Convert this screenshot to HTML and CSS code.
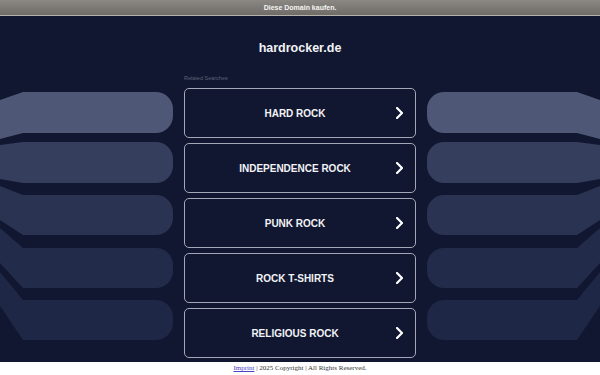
FILE: index.html
```html
<!DOCTYPE html>
<html>
<head>
  <title>hardrocker.de</title>
  <link rel="stylesheet" href="styles.css">
</head>
<body>
  <div class="topbar">Diese Domain kaufen.</div>

  <div class="main">
    <svg class="deco" width="173" height="346" viewBox="0 16 173 346">
      <path fill="#4e5776" d="M0,100 L23,92 L156,92 A17,17 0 0 1 173,109 L173,116 A17,17 0 0 1 156,133 L23,133 L0,139 Z"/>
      <path fill="#363e5e" d="M0,145 L23,142 L156,142 A17,17 0 0 1 173,159 L173,166 A17,17 0 0 1 156,183 L23,183 L0,179 Z"/>
      <path fill="#2b3352" d="M0,186 L23,195 L156,195 A17,17 0 0 1 173,212 L173,218 A17,17 0 0 1 156,235 L23,235 L0,220 Z"/>
      <path fill="#232b4b" d="M0,228 L23,248 L156,248 A17,17 0 0 1 173,265 L173,271 A17,17 0 0 1 156,288 L23,288 L0,263 Z"/>
      <path fill="#1f2746" d="M0,272 L23,300 L156,300 A17,17 0 0 1 173,317 L173,323 A17,17 0 0 1 156,340 L23,340 L0,306 Z"/>
    </svg>

    <div class="center">
      <h1 class="domain">hardrocker.de</h1>
      <div class="related">Related Searches</div>
      <div class="links">
        <a class="link" href="#"><span class="label">HARD ROCK</span><svg class="chev" width="7" height="12" viewBox="0 0 7 12"><polyline points="1,1 6,6 1,11"/></svg></a>
        <a class="link" href="#"><span class="label">INDEPENDENCE ROCK</span><svg class="chev" width="7" height="12" viewBox="0 0 7 12"><polyline points="1,1 6,6 1,11"/></svg></a>
        <a class="link" href="#"><span class="label">PUNK ROCK</span><svg class="chev" width="7" height="12" viewBox="0 0 7 12"><polyline points="1,1 6,6 1,11"/></svg></a>
        <a class="link" href="#"><span class="label">ROCK T-SHIRTS</span><svg class="chev" width="7" height="12" viewBox="0 0 7 12"><polyline points="1,1 6,6 1,11"/></svg></a>
        <a class="link" href="#"><span class="label">RELIGIOUS ROCK</span><svg class="chev" width="7" height="12" viewBox="0 0 7 12"><polyline points="1,1 6,6 1,11"/></svg></a>
      </div>
    </div>

    <svg class="deco deco-right" width="173" height="346" viewBox="0 16 173 346">
      <path fill="#4e5776" d="M0,100 L23,92 L156,92 A17,17 0 0 1 173,109 L173,116 A17,17 0 0 1 156,133 L23,133 L0,139 Z"/>
      <path fill="#363e5e" d="M0,145 L23,142 L156,142 A17,17 0 0 1 173,159 L173,166 A17,17 0 0 1 156,183 L23,183 L0,179 Z"/>
      <path fill="#2b3352" d="M0,186 L23,195 L156,195 A17,17 0 0 1 173,212 L173,218 A17,17 0 0 1 156,235 L23,235 L0,220 Z"/>
      <path fill="#232b4b" d="M0,228 L23,248 L156,248 A17,17 0 0 1 173,265 L173,271 A17,17 0 0 1 156,288 L23,288 L0,263 Z"/>
      <path fill="#1f2746" d="M0,272 L23,300 L156,300 A17,17 0 0 1 173,317 L173,323 A17,17 0 0 1 156,340 L23,340 L0,306 Z"/>
    </svg>
  </div>

  <div class="footer">
    <a href="#">Imprint</a> | 2025 Copyright | All Rights Reserved.
  </div>
</body>
</html>
```

FILE: styles.css
```css
body {
  margin: 0;
  background-color: #111730;
  font-family: "Liberation Sans", Arial, sans-serif;
}
.topbar {
  height: 15px;
  line-height: 15px;
  background: linear-gradient(#8b8883, #6f6c68);
  border-bottom: 1px solid #b3b1ac;
  color: #f4f4f4;
  font-size: 7px;
  font-weight: bold;
  text-align: center;
}
.main {
  display: flex;
  gap: 11px;
  height: 346px;
  overflow: hidden;
}
.deco {
  flex: none;
  display: block;
}
.deco-right {
  transform: scaleX(-1);
}
.center {
  width: 232px;
  flex: none;
  padding-top: 25px;
}
.domain {
  margin: 0;
  height: 14px;
  line-height: 14px;
  font-size: 12.5px;
  font-weight: bold;
  color: #f2f3f6;
  text-align: center;
}
.related {
  margin-top: 20px;
  height: 6px;
  line-height: 6px;
  font-size: 5.5px;
  color: #5b6279;
}
.links {
  display: flex;
  flex-direction: column;
  gap: 5px;
  margin-top: 7px;
}
.link {
  display: flex;
  align-items: center;
  height: 50px;
  box-sizing: border-box;
  padding-left: 9px;
  border: 1.5px solid #a3a7b6;
  border-radius: 5px;
  color: #f2f3f6;
  text-decoration: none;
  font-size: 10px;
  font-weight: bold;
}
.label {
  flex: 1;
  text-align: center;
}
.chev {
  flex: none;
  margin-right: 12px;
}
.chev polyline {
  fill: none;
  stroke: #ffffff;
  stroke-width: 2.2;
  stroke-linecap: round;
  stroke-linejoin: round;
}
.footer {
  height: 13px;
  line-height: 13px;
  background-color: #ffffff;
  color: #333333;
  font-family: "Liberation Serif", "Times New Roman", serif;
  font-size: 7px;
  text-align: center;
}
.footer a {
  color: #4b44c8;
}
```
